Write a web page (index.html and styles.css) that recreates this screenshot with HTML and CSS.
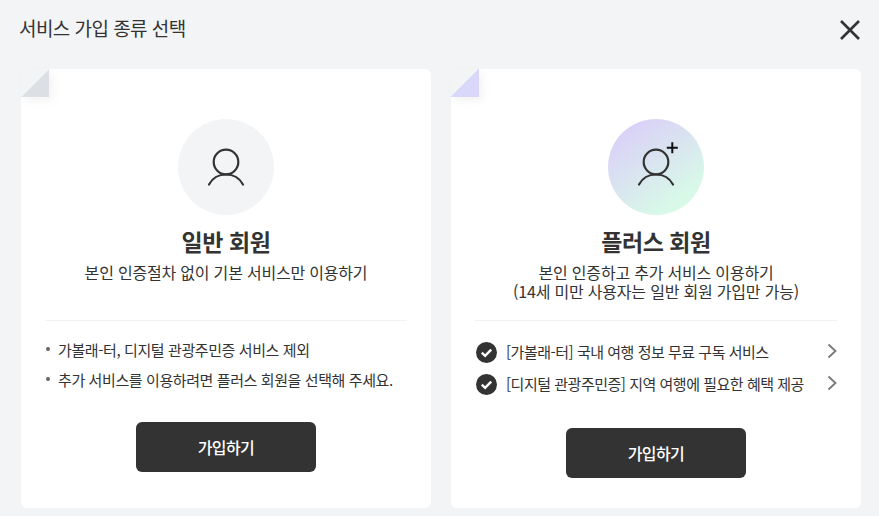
FILE: index.html
```html
<!DOCTYPE html>
<html lang="ko">
<head>
<meta charset="utf-8">
<title>서비스 가입 종류 선택</title>
<link rel="stylesheet" href="styles.css">
</head>
<body>
<div class="modal">
  <header class="head">
    <h1 class="head-title">서비스 가입 종류 선택</h1>
    <button class="close" aria-label="닫기">
      <svg width="20" height="20" viewBox="0 0 20 20"><path d="M1 1L19 19M19 1L1 19" fill="none" stroke="#333" stroke-width="2.600"/></svg>
    </button>
  </header>
  <div class="cards">
    <section class="card card-basic">
      <span class="fold"></span>
      <div class="avatar">
        <svg width="40" height="40" viewBox="0 0 40 40"><g fill="none" stroke="#333" stroke-width="2.200" stroke-linecap="round"><circle cx="20" cy="15" r="12.300"/><path d="M3 37.500C7 30 13 27.500 20 27.500S33 30 37 37.500"/></g></svg>
      </div>
      <h2 class="card-title">일반 회원</h2>
      <p class="card-desc">본인 인증절차 없이 기본 서비스만 이용하기</p>
      <ul class="notes">
        <li>가볼래-터, 디지털 관광주민증 서비스 제외</li>
        <li>추가 서비스를 이용하려면 플러스 회원을 선택해 주세요.</li>
      </ul>
      <button class="join">가입하기</button>
    </section>
    <section class="card card-plus">
      <span class="fold"></span>
      <div class="avatar">
        <svg width="40" height="40" viewBox="0 0 40 40"><g fill="none" stroke="#333" stroke-width="2.200" stroke-linecap="round"><circle cx="20" cy="15" r="12.300"/><path d="M3 37.500C7 30 13 27.500 20 27.500S33 30 37 37.500"/></g><path d="M36.300 -4.800V6.200M30.800 0.700H41.800" stroke="#111" stroke-width="2"/></svg>
      </div>
      <h2 class="card-title">플러스 회원</h2>
      <p class="card-desc">본인 인증하고 추가 서비스 이용하기<br>(14세 미만 사용자는 일반 회원 가입만 가능)</p>
      <ul class="perks">
        <li>
          <svg class="check" width="21" height="21" viewBox="0 0 21 21"><circle cx="10.500" cy="10.500" r="10.500" fill="#333"/><path d="M5.800 10.700L9.100 13.800L15.200 7.600" fill="none" stroke="#fff" stroke-width="2.400"/></svg>
          <span class="perk-text">[가볼래-터] 국내 여행 정보 무료 구독 서비스</span>
          <svg class="chev" width="10" height="16" viewBox="0 0 10 16"><path d="M1.500 1.500L8.500 8L1.500 14.500" fill="none" stroke="#777" stroke-width="1.800"/></svg>
        </li>
        <li>
          <svg class="check" width="21" height="21" viewBox="0 0 21 21"><circle cx="10.500" cy="10.500" r="10.500" fill="#333"/><path d="M5.800 10.700L9.100 13.800L15.200 7.600" fill="none" stroke="#fff" stroke-width="2.400"/></svg>
          <span class="perk-text">[디지털 관광주민증] 지역 여행에 필요한 혜택 제공</span>
          <svg class="chev" width="10" height="16" viewBox="0 0 10 16"><path d="M1.500 1.500L8.500 8L1.500 14.500" fill="none" stroke="#777" stroke-width="1.800"/></svg>
        </li>
      </ul>
      <button class="join">가입하기</button>
    </section>
  </div>
</div>
</body>
</html>
```
FILE: styles.css
```css
* { box-sizing: border-box; }
html, body { margin: 0; height: 100%; }
body {
  background: #f3f4f6;
  color: #333;
  font-family: "Noto Sans CJK KR", "Noto Sans", sans-serif;
  overflow: hidden;
}
.modal { width: 879px; height: 516px; padding: 0 18px 8px 21px; }
.head { height: 69px; display: flex; justify-content: space-between; padding-top: 14px; margin-left: -2px; }
.head-title { margin: 0; font-size: 19px; font-weight: 400; line-height: 27px; letter-spacing: -0.55px; }
.close { width: 20px; height: 20px; padding: 0; margin-top: 6px; margin-right: 1px; border: 0; background: none; }
.close svg { display: block; }
.cards { display: flex; gap: 20px; height: 439px; }
.card {
  position: relative;
  width: 410px;
  background: #fff;
  border-radius: 6px;
  padding: 50px 24px 0;
  display: flex;
  flex-direction: column;
  align-items: center;
}
.fold {
  position: absolute;
  left: 0;
  top: 0;
  width: 28px;
  height: 28px;
  background: #f3f4f6;
}
.fold::after {
  content: "";
  position: absolute;
  inset: 0;
  background: linear-gradient(135deg, #f3f4f6 50%, #dcdfe3 50%);
  box-shadow: 4px 4px 10px rgba(0, 0, 0, 0.05);
}
.card-plus .fold::after { background: linear-gradient(135deg, #f3f4f6 50%, #dad8fa 50%); }
.avatar {
  width: 96px;
  height: 96px;
  border-radius: 50%;
  background: #f3f4f6;
  display: flex;
  align-items: center;
  justify-content: center;
}
.avatar svg { overflow: visible; }
.card-plus .avatar { background: linear-gradient(145deg, #dad2f7 15%, #d8f9e8 80%); }
.card-title { margin: 9px 0 0; font-size: 23px; font-weight: 700; line-height: 34px; letter-spacing: -0.45px; color: #333; }
.card-desc {
  margin: 5px 0 0;
  width: 100%;
  height: 58px;
  font-size: 16px;
  line-height: 19px;
  text-align: center;
  letter-spacing: -0.2px;
  border-bottom: 1px solid #f1f2f4;
}
.notes {
  list-style: none;
  width: 100%;
  margin: 14px 0 0;
  padding: 0;
  font-size: 15px;
  line-height: 30px;
  letter-spacing: -0.4px;
}
.notes li { position: relative; padding-left: 13px; }
.notes li::before {
  content: "";
  position: absolute;
  left: 1px;
  top: 12px;
  width: 4px;
  height: 4px;
  border-radius: 50%;
  background: #666;
}
.notes + .join { margin-top: 27px; }
.perks {
  list-style: none;
  width: 100%;
  margin: 15px 0 0;
  padding: 0 0 0 1px;
  font-size: 15px;
  letter-spacing: -0.48px;
}
.perks li { display: flex; align-items: center; height: 32px; line-height: 20px; }
.perk-text { flex: 1; margin-left: 9px; }
.chev { margin-top: -2px; }
.join {
  margin-top: 28px;
  width: 180px;
  height: 50px;
  border: 0;
  border-radius: 6px;
  background: #333;
  color: #fff;
  font: 500 16px/22px "Noto Sans CJK KR", sans-serif;
  letter-spacing: -0.6px;
}
```
